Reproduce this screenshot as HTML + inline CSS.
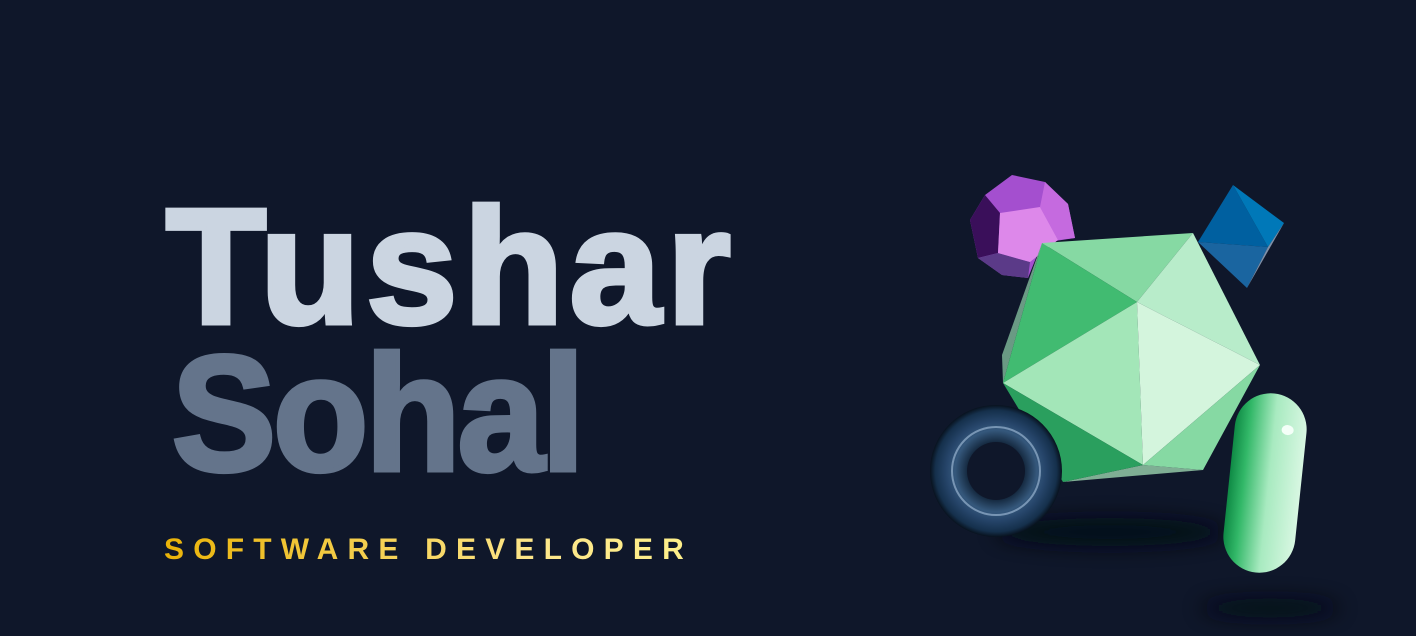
<!DOCTYPE html>
<html><head><meta charset="utf-8"><style>
html,body{margin:0;padding:0;background:#0f172a;}
body{width:1416px;height:636px;position:relative;overflow:hidden;font-family:"Liberation Sans",sans-serif;}
.t{position:absolute;white-space:nowrap;line-height:1;font-weight:bold;}
#a{left:166px;top:185px;font-size:164px;color:#cbd5e1;letter-spacing:6px;-webkit-text-stroke:5px #cbd5e1;}
#b{left:172px;top:332px;font-size:164px;color:#64748b;letter-spacing:-3px;-webkit-text-stroke:5px #64748b;transform:scaleX(0.95);transform-origin:0 0;}
#c{left:164px;top:535px;font-size:30px;letter-spacing:9.2px;background:linear-gradient(90deg,#eab308,#fde68a 70%,#fef08a);-webkit-background-clip:text;background-clip:text;color:transparent;}
svg{position:absolute;left:0;top:0;}
</style></head><body>
<div class="t" id="a">Tushar</div>
<div class="t" id="b">Sohal</div>
<div class="t" id="c">SOFTWARE DEVELOPER</div>
<svg width="1416" height="636" viewBox="0 0 1416 636">
<defs>
<filter id="bl" x="-50%" y="-200%" width="200%" height="500%"><feGaussianBlur stdDeviation="10"/></filter>
<radialGradient id="tor" cx="50%" cy="50%" r="50%">
<stop offset="40%" stop-color="#0f172a"/><stop offset="43%" stop-color="#14283e"/><stop offset="62%" stop-color="#35587c"/><stop offset="75%" stop-color="#26456a"/><stop offset="92%" stop-color="#15304c"/><stop offset="100%" stop-color="#08121e"/></radialGradient>
<linearGradient id="cap" x1="0" x2="1" y1="0" y2="0">
<stop offset="0" stop-color="#0f8a45"/><stop offset="0.2" stop-color="#32b868"/><stop offset="0.55" stop-color="#a8eac0"/><stop offset="1" stop-color="#d8f7e2"/></linearGradient>
</defs>
<ellipse cx="1110" cy="532" rx="115" ry="14" fill="#050a14" filter="url(#bl)" opacity="0.9"/>
<ellipse cx="1270" cy="608" rx="70" ry="10" fill="#050a14" filter="url(#bl)" opacity="0.8"/>
<polygon points="1012,175 1045,182 1068,204 1075,238 1042,243 1028,278 1002,275 978,258 970,220 985,195" fill="#a44fcf"/>
<polygon points="985,195 970,220 978,258 998,253 1000,213" fill="#3a0f5a"/>
<polygon points="978,258 1002,275 1028,278 1030,262 998,253" fill="#5b3a88"/>
<polygon points="1040,207 1045,182 1068,204 1075,238 1058,240" fill="#c56adf"/>
<polygon points="1000,213 1040,207 1058,240 1030,262 998,253" fill="#dd88ea"/>
<polygon points="1233,185 1198,242 1268,247" fill="#0060a0"/>
<polygon points="1233,185 1284,223 1268,247" fill="#0078b8"/>
<polygon points="1198,242 1268,247 1247,288" fill="#1a65a0"/>
<polygon points="1268,247 1284,223 1247,288" fill="#7f90a8"/>
<polygon points="1042,243 1003,383 1002,355" fill="#6a9a84"/>
<polygon points="1063,482 1143,465 1203,470" fill="#7fae94"/>
<polygon points="1042,243 1193,233 1137,302" fill="#86d9a3"/>
<polygon points="1042,243 1137,302 1003,383" fill="#41bb71"/>
<polygon points="1193,233 1260,365 1137,302" fill="#b8ecca"/>
<polygon points="1003,383 1137,302 1143,465" fill="#a3e6b8"/>
<polygon points="1137,302 1260,365 1143,465" fill="#d4f5dd"/>
<polygon points="1003,383 1143,465 1063,482" fill="#2a9f5e"/>
<polygon points="1260,365 1203,470 1143,465" fill="#86d9a3"/>
<circle cx="996" cy="471" r="66" fill="url(#tor)"/>
<circle cx="996" cy="471" r="44" fill="none" stroke="#a9c3de" stroke-width="2" opacity="0.6"/>
<circle cx="996" cy="471" r="29" fill="#0f172a"/>
<g transform="rotate(6 1265 483)">
<rect x="1229" y="393" width="72" height="180" rx="36" fill="url(#cap)"/>
<ellipse cx="1282" cy="428" rx="6" ry="5" fill="#f4fff8"/>
</g>
</svg>
</body></html>
